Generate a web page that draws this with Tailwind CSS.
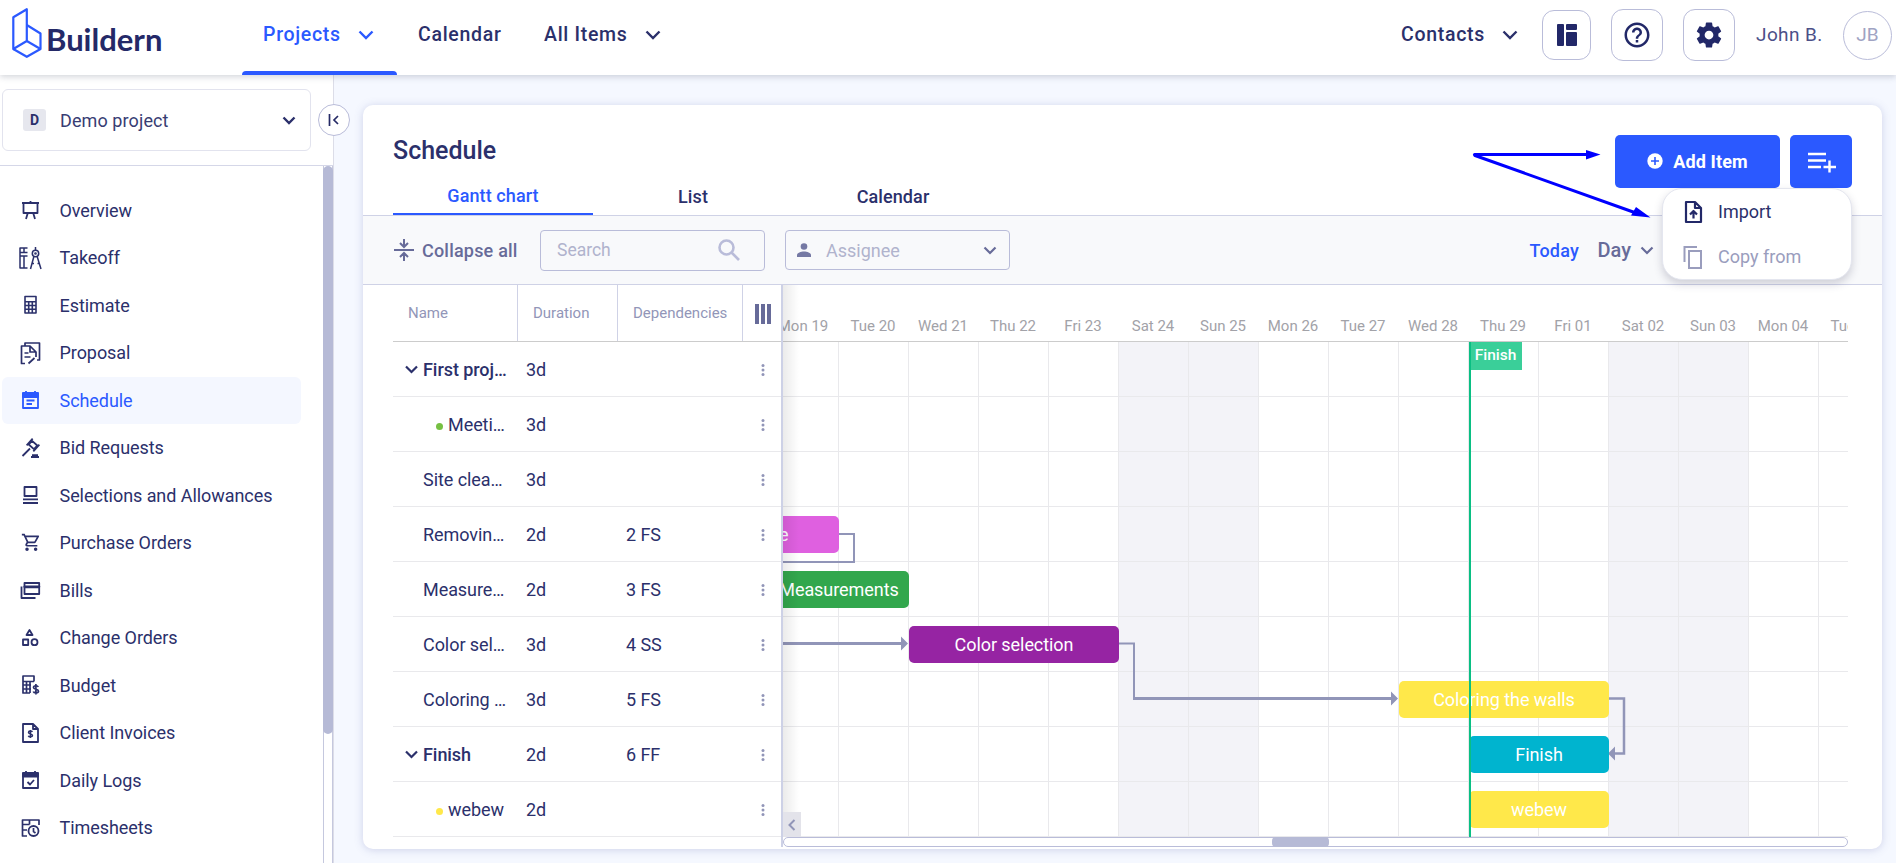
<!DOCTYPE html>
<html lang="en">
  <head>
    <meta charset="UTF-8" />
    <meta name="viewport" content="width=device-width, initial-scale=1.0" />
    <title>Buildern - Schedule</title>
    <script src="https://cdn.jsdelivr.net/npm/@tailwindcss/browser@4"></script>
  </head>
  <body class="h-[863px] overflow-hidden flex flex-col bg-[#f5f8ff] font-['Roboto',sans-serif] text-[#2b306b]">
    <!-- Top bar -->
    <header class="relative z-20 h-[75px] shrink-0 bg-white flex items-center shadow-[0_2px_6px_rgba(60,70,90,0.22)]">
      <a href="#" class="flex w-[242px] h-full pl-[11px]">
        <svg class="mt-[7px] shrink-0" width="32" height="52" viewBox="0 0 32 52" fill="none" stroke="#2b59ff" stroke-width="2.2" stroke-linejoin="round">
          <path d="M2.300 10.300 15.800 2.200V34L2.300 42z" />
          <path d="M15.800 18 29.500 26.500V42L15.800 49.800 2.300 42" />
          <path d="M15.800 34 29.500 42" />
        </svg>
        <span class="ml-[3px] mt-[20px] text-[31px] leading-[38px] font-bold font-['Lato',sans-serif] text-[#242968]">Buildern</span>
      </a>
      <nav class="flex h-full text-[19.5px] font-medium tracking-[0.7px]">
        <a href="#" class="relative flex items-center w-[155px] pl-[21px] pb-[5px] text-[#2b59ff]">
          Projects
          <svg class="ml-[17px]" width="16" height="10" viewBox="0 0 16 10" fill="none" stroke="currentColor" stroke-width="2.4"><path d="M1.500 1.500 8 8l6.500-6.500" /></svg>
          <span class="absolute left-0 bottom-0 w-[155px] h-1 rounded-t bg-[#2b59ff]"></span>
        </a>
        <a href="#" class="flex items-center w-[126px] pl-[21px] pb-[5px]">Calendar</a>
        <a href="#" class="flex items-center pl-[21px] pb-[5px]">
          All Items
          <svg class="ml-[17px]" width="16" height="10" viewBox="0 0 16 10" fill="none" stroke="currentColor" stroke-width="2.4"><path d="M1.500 1.500 8 8l6.500-6.500" /></svg>
        </a>
      </nav>
      <div class="ml-auto flex items-center h-full pb-[5px] pr-[4px]">
        <a href="#" class="flex items-center w-[141px] text-[19.5px] font-medium tracking-[0.7px]">
          Contacts
          <svg class="ml-[17px]" width="16" height="10" viewBox="0 0 16 10" fill="none" stroke="currentColor" stroke-width="2.4"><path d="M1.500 1.500 8 8l6.500-6.500" /></svg>
        </a>
        <button class="w-[49px] h-[50px] mr-5 rounded-xl border border-[#b9bcd9] flex items-center justify-center">
          <svg width="22" height="24" viewBox="0 0 22 24" fill="#222868"><rect x="1" y="1" width="7" height="22" rx="1" /><rect x="10" y="1" width="11" height="6" rx="1" /><rect x="10" y="9" width="11" height="14" rx="1" /></svg>
        </button>
        <button class="w-[52px] h-[52px] mr-5 rounded-xl border border-[#b9bcd9] flex items-center justify-center">
          <svg width="30" height="30" viewBox="0 0 24 24" fill="#222868"><path d="M11 18h2v-2h-2v2zm1-16C6.480 2 2 6.480 2 12s4.480 10 10 10 10-4.480 10-10S17.520 2 12 2zm0 18c-4.410 0-8-3.590-8-8s3.590-8 8-8 8 3.590 8 8-3.590 8-8 8zm0-14c-2.210 0-4 1.790-4 4h2c0-1.100.9-2 2-2s2 .9 2 2c0 2-3 1.750-3 5h2c0-2.250 3-2.500 3-5 0-2.210-1.790-4-4-4z" /></svg>
        </button>
        <button class="w-[52px] h-[52px] mr-[21px] rounded-xl border border-[#b9bcd9] flex items-center justify-center">
          <svg width="30" height="30" viewBox="0 0 24 24" fill="#222868"><path d="M19.430 12.980c.040-.320.070-.640.070-.980s-.030-.660-.070-.980l2.110-1.650c.190-.150.240-.420.120-.640l-2-3.460c-.120-.220-.390-.300-.610-.220l-2.490 1c-.520-.400-1.080-.730-1.690-.980l-.380-2.650C14.460 2.180 14.250 2 14 2h-4c-.250 0-.460.180-.490.420l-.380 2.650c-.610.250-1.170.590-1.690.980l-2.490-1c-.230-.090-.490 0-.610.220l-2 3.460c-.130.220-.070.490.120.640l2.110 1.650c-.040.320-.070.650-.070.980s.030.660.070.980l-2.110 1.650c-.190.150-.240.420-.120.640l2 3.460c.120.220.390.300.610.220l2.490-1c.520.400 1.080.730 1.690.980l.380 2.650c.030.240.240.420.490.420h4c.250 0 .460-.180.490-.420l.380-2.650c.610-.250 1.170-.590 1.690-.980l2.490 1c.230.090.490 0 .610-.220l2-3.460c.120-.220.070-.490-.120-.640l-2.110-1.650zM12 15.500c-1.930 0-3.500-1.570-3.500-3.500s1.570-3.500 3.500-3.500 3.500 1.570 3.500 3.500-1.570 3.500-3.500 3.500z" /></svg>
        </button>
        <span class="w-[87px] text-[19px] tracking-[0.4px] text-[#4c5088]">John B.</span>
        <span class="size-[49px] rounded-full border border-[#b9bcd9] flex items-center justify-center text-[19px] text-[#a0a3c3]">JB</span>
      </div>
    </header>

    <div class="flex flex-1 min-h-0">
      <!-- Sidebar -->
      <aside class="relative w-[334px] shrink-0 bg-white border-r border-[#dcdde8] flex flex-col">
        <div class="h-[91px] shrink-0 pt-[14px] pl-[2px] border-b border-[#d5d7e8]">
          <div class="w-[309px] h-[62px] pl-5 pr-[14px] rounded-md border border-[#e2e3ee] flex items-center">
            <span class="w-[23px] h-[22px] rounded-[3px] bg-[#e6e7ee] flex items-center justify-center text-[14px] font-bold">D</span>
            <span class="ml-[14px] text-[18px] tracking-[0.1px] text-[#383d73]">Demo project</span>
            <svg class="ml-auto" width="14" height="9" viewBox="0 0 14 9" fill="none" stroke="currentColor" stroke-width="2.4"><path d="m1.500 1.500 5.500 5.500 5.500-5.500" /></svg>
          </div>
        </div>
        <button class="absolute left-[318px] top-[29px] size-8 rounded-full bg-white border border-[#b9bcd9] flex items-center justify-center">
          <svg width="12" height="14" viewBox="0 0 12 14" fill="none" stroke="#252a66" stroke-width="1.700"><path d="M1.500 1v12M10 3 6 7l4 4" /></svg>
        </button>
        <div class="flex flex-1 min-h-0">
          <nav id="menu" class="w-[323px] pl-[2px] pt-[20.500px] overflow-hidden"></nav>
          <div class="w-[10px] border-x border-[#c5c8de]">
            <div class="-mx-px h-[568px] rounded-[5px] bg-[#b6bad6]"></div>
          </div>
        </div>
      </aside>

      <!-- Schedule -->
      <main class="flex-1 pl-[29px] pr-[14px] pt-[30px]">
        <section class="relative h-[744px] rounded-[10px] bg-white shadow-[0_1px_8px_rgba(90,100,170,0.25)] flex flex-col">
          <div class="h-[111px] shrink-0 pl-[30px] flex flex-col border-b border-[#cfd2e6]">
            <h1 class="h-[72px] pt-[29px] text-[25px] leading-[34px] font-medium">Schedule</h1>
            <div class="mt-auto flex h-[38px] text-[18px] font-medium tracking-[0.1px]">
              <a href="#" class="w-[200px] pt-[5px] leading-[28px] text-center text-[#2b59ff] border-b-2 border-[#2b59ff]">Gantt chart</a>
              <a href="#" class="w-[200px] pt-[6px] leading-[28px] text-center">List</a>
              <a href="#" class="w-[200px] pt-[6px] leading-[28px] text-center">Calendar</a>
            </div>
          </div>

          <div class="h-[69px] shrink-0 pl-[30px] flex items-center border-b border-[#cfd2e6] bg-[#f8f9fb]">
            <button class="flex items-center w-[147px] text-[18px] font-medium tracking-[0.2px] text-[#676b99]">
              <svg class="mr-[7px]" width="22" height="24" viewBox="0 0 22 24" fill="none" stroke="currentColor" stroke-width="2"><path d="M1 12h20M11 1v7M7 5l4 4 4-4M11 23v-7M7 19l4-4 4 4" /></svg>
              Collapse all
            </button>
            <div class="w-[225px] h-[41px] mr-5 pl-4 pr-[23px] rounded border border-[#b9bcd9] flex items-center justify-between text-[17.5px] text-[#b0b3cd]">
              Search
              <svg width="24" height="24" viewBox="0 0 24 24" fill="none" stroke="#b9bcd9" stroke-width="2.600"><circle cx="9.500" cy="9.500" r="7" /><path d="m14.500 14.500 7.500 7.500" /></svg>
            </div>
            <div class="w-[225px] h-[40px] pl-[11px] pr-3 rounded border border-[#b9bcd9] flex items-center text-[18px] text-[#b0b3cd]">
              <svg width="14" height="14" viewBox="0 0 14 14" fill="#7579a4"><circle cx="7" cy="3.500" r="3.300" /><path d="M0 14v-2c0-2.300 4-3.600 7-3.600s7 1.300 7 3.600v2z" /></svg>
              <span class="ml-[15px]">Assignee</span>
              <svg class="ml-auto" width="14" height="9" viewBox="0 0 14 9" fill="none" stroke="#676b99" stroke-width="2.200"><path d="m1.500 1.500 5.500 5.500 5.500-5.500" /></svg>
            </div>
            <a href="#" class="ml-auto w-[68px] text-[18px] font-medium tracking-[0.2px] text-[#2b59ff]">Today</a>
            <button class="flex items-center mr-[228px] text-[20px] font-medium text-[#676b99]">
              Day
              <svg class="ml-[9px]" width="14" height="9" viewBox="0 0 14 9" fill="none" stroke="currentColor" stroke-width="2.200"><path d="m1.500 1.500 5.500 5.500 5.500-5.500" /></svg>
            </button>
          </div>

          <!-- Grid + timeline -->
          <div class="flex pl-[30px] pr-[34px]">
            <div class="w-[390px] h-[562px] shrink-0 border-r-2 border-[#cdd1e6]">
              <div class="flex h-[57px] border-b border-[#cccccc] text-[15px] text-[#9296b8] leading-[56px]">
                <span class="w-[125px] pl-[15px] border-r border-[#cfd2e6]">Name</span>
                <span class="w-[100px] pl-[15px] border-r border-[#cfd2e6]">Duration</span>
                <span class="w-[125px] pl-[15px] border-r border-[#cfd2e6]">Dependencies</span>
                <span class="flex-1 flex items-center justify-center gap-[2px] pl-[2px] pt-px">
                  <i class="w-[4px] h-5 bg-[#676b99]"></i><i class="w-[4px] h-5 bg-[#676b99]"></i><i class="w-[4px] h-5 bg-[#676b99]"></i>
                </span>
              </div>
              <div id="rows"></div>
            </div>

            <div class="relative w-[1065px] overflow-hidden">
              <div id="days" class="flex h-[57px] w-[1176px] pt-[26px] border-b border-[#cccccc] text-[15px] leading-[30px] text-[#a2a2a8]"></div>
              <div class="relative h-[495px]">
                <div id="columns" class="flex h-full w-[1176px]"></div>
                <div id="lines" class="absolute inset-0"></div>
                <svg class="absolute inset-0" width="1065" height="495" fill="none" stroke="#9195b8" stroke-width="2">
                  <path d="M56 192h15v28H0" />
                  <path d="M0 301.500h120" stroke-width="3" />
                  <path d="M336 301.500h15v55" />
                  <path d="M350 356.500h260" stroke-width="3" />
                  <path d="M826 356.500h15v55h-10" stroke-width="2.500" />
                  <path d="M118 294.500v14l7-7zM608 349.500v14l7-7zM832 404.500v14l-7-7z" fill="#9195b8" stroke="none" />
                </svg>
                <div id="bars" class="text-white text-[18px] leading-[38px] text-center"></div>
                <div class="absolute left-[686px] top-0 w-[2px] h-[495px] bg-[#0abf83]"></div>
                <div class="absolute left-[688px] top-0 w-[51px] h-[28px] pr-[2px] bg-[#3acf99] text-white text-[15.5px] leading-[27px] font-medium text-center">Finish</div>
              </div>
              <div class="h-[10px] rounded-[5px] border border-[#b9bcd9]">
                <div class="-mt-px ml-[488px] w-[57px] h-[10px] rounded-[4px] bg-[#b6bad6]"></div>
              </div>
              <div class="absolute left-0 top-0 w-[16px] h-[552px] bg-linear-to-r from-black/8 to-transparent"></div>
              <div class="absolute left-0 top-[527px] w-[18px] h-[25px] bg-[#e3e3ea] flex items-center justify-center">
                <svg width="8" height="12" viewBox="0 0 8 12" fill="none" stroke="#9195b8" stroke-width="2"><path d="M6.500 1 1.500 6l5 5" /></svg>
              </div>
            </div>
          </div>

          <!-- Actions -->
          <div class="absolute top-[30px] right-[30px] flex gap-[10px]">
            <button class="w-[165px] h-[53px] pb-px rounded-[5px] bg-[#2b59ff] text-white text-[18px] font-bold tracking-[0.1px] flex items-center justify-center gap-[10px]">
              <svg width="16" height="16" viewBox="0 0 16 16"><circle cx="8" cy="8" r="7.700" fill="#fff" /><path d="M8 4v8M4 8h8" stroke="#2b59ff" stroke-width="1.600" /></svg>
              Add Item
            </button>
            <button class="w-[62px] h-[53px] pl-[2px] rounded-[5px] bg-[#2b59ff] flex items-center justify-center">
              <svg width="30" height="24" viewBox="0 0 30 24" fill="none" stroke="#fff" stroke-width="2.400"><path d="M1 4h18M1 10.500h18M1 17h13M22.500 10.500v12M16.500 17h12.500" /></svg>
            </button>
          </div>
          <div class="absolute top-[83px] left-[1299px] w-[190px] h-[92px] rounded-[20px] bg-white border border-[#e4e6ef] shadow-[0_4px_8px_rgba(60,60,90,0.22)] text-[18px]">
            <a href="#" class="flex items-center h-[45px] pl-[20px]">
              <svg width="20" height="24" viewBox="0 0 20 24" fill="none" stroke="#222868" stroke-width="2.200" stroke-linejoin="round"><path d="M3 2h9l6 6v14H3zM12 2v6h6M10.500 18.500v-7M7 14.500l3.500-3.500 3.500 3.500" /></svg>
              <span class="ml-[15px]">Import</span>
            </a>
            <a href="#" class="flex items-center h-[45px] pl-[20px] text-[#9a9dbd]">
              <svg width="20" height="24" viewBox="0 0 20 24" fill="none" stroke="currentColor" stroke-width="2"><path d="M1.500 17V2H14M6 6h12v17H6z" /></svg>
              <span class="ml-[15px]">Copy from</span>
            </a>
          </div>
          <svg class="absolute left-[1105px] top-[40px]" width="190" height="80" stroke="#0000ff" stroke-width="3" stroke-linecap="round" fill="#0000ff">
            <path d="M6.500 9.500H120" />
            <path d="M7 10.500 168 68" />
            <path d="M118 5v9.500l14.500-5zM168 62l-5 8.500 19.500 2z" stroke="none" />
          </svg>
        </section>
      </main>
    </div>

    <script>
      const menu = [
        ["Overview", '<path d="M3 4h17M4.500 4v10h14V4M8.800 14 7 20M14.200 14l1.800 6M11.500 2v2"/>'],
        ["Takeoff", '<g stroke-width="1.500"><path d="M8.500 1H1v20h7.500M1 5.500h7.500M1 9h7.500M5 1v4.500M5 9v12M15 9l-3.500 13M18 9l4 13M16.500 0v3M13 16.500h2M18.500 16.500h2"/><circle cx="16.500" cy="6.500" r="3.200"/><circle cx="16.500" cy="6.500" r=".6"/></g>'],
        ["Estimate", '<path stroke-width="1.600" d="M6 2.500h11v16.500H6zM6 7.700h11M6 11.500h11M6 15.200h11M9.700 7.700V19M13.300 7.700V19"/>'],
        ["Proposal", '<path stroke-width="1.700" d="M6 4V1h14.500v17H18M6 21.500H2.500V4H11l6 6v5M11 4.500V10h5.500M5.500 11h4M5.500 15h6M9.500 21.500l6-5.500"/>'],
        ["Schedule", '<path d="M4 4.500h15v14.500H4zM7 2v3M16 2v3M7.500 11.500h8M7.500 15h5.500"/><path d="M4 4h15v4H4z" fill="currentColor"/>'],
        ["Bid Requests", '<path d="M3.500 19 11 11.500M13 18.200h6M12 20h8"/><g transform="rotate(42 14 8)"><path d="M10.500 5.500h7v5h-7zM9.500 3.500v9M18.500 3.500v9"/></g>'],
        ["Selections and Allowances", '<path d="M5.500 3h12v9h-12zM4 15.300h15M4 19h15"/>'],
        ["Purchase Orders", '<path transform="translate(2 0) scale(.86)" fill="currentColor" stroke="none" d="M15.550 13c.75 0 1.410-.41 1.750-1.030l3.580-6.490A.996.996 0 0 0 20.010 4H5.210l-.94-2H1v2h2l3.600 7.590-1.350 2.440C4.520 15.370 5.480 17 7 17h12v-2H7l1.100-2h7.450zM6.160 6h12.150l-2.760 5H8.530L6.160 6zM7 18c-1.100 0-1.990.9-1.990 2S5.900 22 7 22s2-.9 2-2-.9-2-2-2zm10 0c-1.100 0-1.990.9-1.990 2s.89 2 1.990 2 2-.9 2-2-.9-2-2-2z"/>'],
        ["Bills", '<path d="M5.500 4h14.700v11H5.500zM5.500 8h14.700M2.500 7.500V19H16.500"/><path d="M5.500 7.300h14.700v1H5.500z"/>'],
        ["Change Orders", '<path d="m10.500 3-3 5h6zM4 12.500h5.200V18H4z"/><circle cx="15.500" cy="15.200" r="3"/>'],
        ["Budget", '<path stroke-width="1.700" d="M15 7.500V2H4v17h7M4 7.500h11M4 11h8M4 15h8M7.500 7.500V19M11 7.500V19"/><path stroke-width="1.700" d="M19.200 13c-.5-1.800-4.700-1.700-4.700.5 0 2.300 5 1.300 5 3.700 0 2.200-4.700 2-5.200.2M16.900 10v10.500"/>'],
        ["Client Invoices", '<path d="M4 2h10l5 5v13H4zM14 2v5h5"/><path stroke-width="1.500" d="M13.300 10c-.5-1.400-3.800-1.300-3.800.4 0 1.900 4 1.200 4 3.100 0 1.800-3.800 1.700-4.200.2M11.400 8v8"/>'],
        ["Daily Logs", '<path d="M4 4.500h15V19H4zM7 2v3M16 2v3M8.500 13l2.500 2.500L15 11"/><path d="M4 4h15v3.500H4z" fill="currentColor"/>'],
        ["Timesheets", '<path stroke-width="1.700" d="M8 19H3.500V3H20v5M3.500 7.500h7M3.500 13H8M10.500 3v4.500M14.500 11v3.500l2 1.500"/><circle cx="14.500" cy="14" r="5"/>'],
      ];
      document.getElementById("menu").innerHTML = menu
        .map(
          ([name, icon]) => `
        <a href="#" class="${name === "Schedule" ? "flex items-center w-[299px] h-[47.5px] pl-[17px] rounded-md bg-[#f4f7ff] text-[#2b59ff]" : "flex items-center w-[299px] h-[47.5px] pl-[17px]"}">
          <svg class="w-[22px] h-[22px] shrink-0 mr-[18.5px] overflow-visible" viewBox="0 0 22 22" fill="none" stroke="currentColor" stroke-width="1.800" stroke-linejoin="round">${icon}</svg>
          <span class="text-[18px] tracking-[-0.06px]">${name}</span>
        </a>`
        )
        .join("");

      const tasks = [
        { name: "First proj…", duration: "3d", deps: "", group: true },
        { name: "Meeti…", duration: "3d", deps: "", dot: "#76c043" },
        { name: "Site clea…", duration: "3d", deps: "" },
        { name: "Removin…", duration: "2d", deps: "2 FS" },
        { name: "Measure…", duration: "2d", deps: "3 FS" },
        { name: "Color sel…", duration: "3d", deps: "4 SS" },
        { name: "Coloring …", duration: "3d", deps: "5 FS" },
        { name: "Finish", duration: "2d", deps: "6 FF", group: true },
        { name: "webew", duration: "2d", deps: "", dot: "#ffe84a" },
      ];
      const nameCell = (t) => {
        if (t.group)
          return `<span class="w-[125px] pl-[12px] flex items-center font-medium"><svg class="mr-[5px]" width="13" height="9" viewBox="0 0 13 9" fill="none" stroke="currentColor" stroke-width="2.200"><path d="m1 1.500 5.500 5.500L12 1.500"/></svg>${t.name}</span>`;
        if (t.dot)
          return `<span class="w-[125px] pl-[43px] flex items-center"><i class="size-[7px] mt-[3px] mr-[5px] rounded-full" style="background:${t.dot}"></i>${t.name}</span>`;
        return `<span class="w-[125px] pl-[30px]">${t.name}</span>`;
      };
      document.getElementById("rows").innerHTML = tasks
        .map(
          (t) => `
        <div class="flex items-center h-[55px] pt-px border-b border-[#e9e9ec] text-[18px] tracking-[-0.06px]">
          ${nameCell(t)}
          <span class="w-[100px] pl-[8px]">${t.duration}</span>
          <span class="w-[125px] pl-[8px]">${t.deps}</span>
          <svg class="ml-[18px]" width="4" height="14" fill="#9195b8"><circle cx="2" cy="2.500" r="1.500"/><circle cx="2" cy="7" r="1.500"/><circle cx="2" cy="11.500" r="1.500"/></svg>
        </div>`
        )
        .join("");
      document.getElementById("lines").innerHTML = tasks
        .map(() => '<div class="h-[55px] border-b border-[#e9e9ec]"></div>')
        .join("");

      const days = ["Mon 19", "Tue 20", "Wed 21", "Thu 22", "Fri 23", "Sat 24", "Sun 25", "Mon 26", "Tue 27", "Wed 28", "Thu 29", "Fri 01", "Sat 02", "Sun 03", "Mon 04", "Tue 05"];
      document.getElementById("days").innerHTML = days
        .map((d, i) => `<span class="${i ? "w-[70px] shrink-0 text-center" : "w-[70px] shrink-0 -ml-[15px] text-center"}">${d}</span>`)
        .join("");
      document.getElementById("columns").innerHTML = days
        .map((d, i) => {
          if (i === 0) return '<div class="w-[56px] shrink-0 border-r border-[#e9e9ec]"></div>';
          return d.startsWith("S")
            ? '<div class="w-[70px] shrink-0 border-r border-[#e9e9ec] bg-[#f3f3f8]"></div>'
            : '<div class="w-[70px] shrink-0 border-r border-[#e9e9ec]"></div>';
        })
        .join("");

      // left and width in px on the timeline, row is the task index
      const bars = [
        { row: 3, left: -84, width: 140, color: "#df60e0", name: "" },
        { row: 4, left: -14, width: 140, color: "#32a74d", name: "Measurements" },
        { row: 5, left: 126, width: 210, color: "#9624a3", name: "Color selection" },
        { row: 6, left: 616, width: 210, color: "#ffe84a", name: "Coloring the walls" },
        { row: 7, left: 686, width: 140, color: "#00b4cf", name: "Finish" },
        { row: 8, left: 686, width: 140, color: "#ffe84a", name: "webew" },
      ];
      document.getElementById("bars").innerHTML =
        bars
          .map(
            (b) =>
              `<div class="absolute h-[37px] rounded-[5px] tracking-[-0.06px] whitespace-nowrap" style="left:${b.left}px;width:${b.width}px;top:${b.row * 55 + 9}px;background:${b.color}">${b.name}</div>`
          )
          .join("") + '<span class="absolute -left-[4px] top-[174px]">e</span>';
    </script>
  </body>
</html>
